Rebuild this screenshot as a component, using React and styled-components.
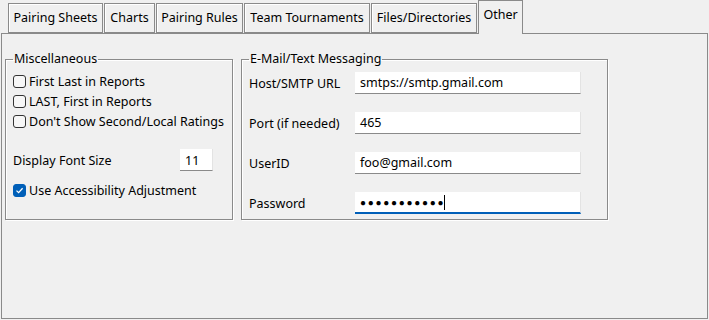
import React from 'react';
import styled, { createGlobalStyle } from 'styled-components';

const GlobalStyle = createGlobalStyle`
  html, body {
    margin: 0;
    padding: 0;
    background: #f0f0f0;
  }
  body {
    font-family: "Noto Sans", "Open Sans", sans-serif;
    font-size: 12px;
    color: #000;
  }
`;

const tabs = [
  { label: 'Pairing Sheets', width: 95 },
  { label: 'Charts', width: 51 },
  { label: 'Pairing Rules', width: 87 },
  { label: 'Team Tournaments', width: 126 },
  { label: 'Files/Directories', width: 106 },
  { label: 'Other', width: 45, active: true },
];

const miscOptions = [
  { label: 'First Last in Reports' },
  { label: 'LAST, First in Reports' },
  { label: "Don't Show Second/Local Ratings" },
];

const mailFields = [
  { label: 'Host/SMTP URL', value: 'smtps://smtp.gmail.com' },
  { label: 'Port (if needed)', value: '465' },
  { label: 'UserID', value: 'foo@gmail.com' },
];

function CheckMark() {
  return (
    <svg width="9" height="9" viewBox="0 0 9 9">
      <path d="M1.5 4.6 L3.6 6.6 L7.6 2.2" fill="none" stroke="#fff" strokeWidth="1.3" />
    </svg>
  );
}

function App() {
  return (
    <Window>
      <GlobalStyle />
      <TabBar>
        {tabs.map((t) => (
          <Tab key={t.label} $width={t.width} $active={t.active}>
            {t.label}
          </Tab>
        ))}
      </TabBar>
      <Panel>
        <Group $width={228}>
          <Legend>Miscellaneous</Legend>
          <CheckList>
            {miscOptions.map((o) => (
              <CheckRow key={o.label}>
                <Box />
                {o.label}
              </CheckRow>
            ))}
          </CheckList>
          <FontRow>
            <span>Display Font Size</span>
            <SmallInput>11</SmallInput>
          </FontRow>
          <CheckRow>
            <Box $checked>
              <CheckMark />
            </Box>
            Use Accessibility Adjustment
          </CheckRow>
        </Group>
        <Group $width={367}>
          <Legend>E-Mail/Text Messaging</Legend>
          <FieldList>
            {mailFields.map((f) => (
              <FieldRow key={f.label}>
                <FieldLabel>{f.label}</FieldLabel>
                <TextField>{f.value}</TextField>
              </FieldRow>
            ))}
            <FieldRow>
              <FieldLabel>Password</FieldLabel>
              <TextField $focused>
                <Dots>●●●●●●●●●●●</Dots>
                <Caret />
              </TextField>
            </FieldRow>
          </FieldList>
        </Group>
      </Panel>
    </Window>
  );
}

export default App;

const Window = styled.div`
  width: 709px;
  height: 320px;
  display: flex;
  flex-direction: column;
  overflow: hidden;
`;

const TabBar = styled.div`
  display: flex;
  align-items: flex-start;
  gap: 1px;
  height: 33px;
  padding-left: 8px;
  position: relative;
  z-index: 1;
`;

const Tab = styled.div`
  box-sizing: border-box;
  width: ${(p) => p.$width}px;
  height: ${(p) => (p.$active ? 34 : 30)}px;
  margin-top: ${(p) => (p.$active ? 0 : 3)}px;
  border: 1px solid #8a8a8a;
  border-bottom: ${(p) => (p.$active ? 'none' : '1px solid #8a8a8a')};
  box-shadow: ${(p) => (p.$active ? 'none' : 'inset 1px 1px 0 #fff')};
  background: #f0f0f0;
  display: flex;
  justify-content: center;
  padding-top: ${(p) => (p.$active ? 5 : 5)}px;
  font-size: 12.5px;
  white-space: nowrap;
`;

const Panel = styled.div`
  box-sizing: border-box;
  margin-left: 1px;
  width: 707px;
  height: 286px;
  border: 1px solid #8a8a8a;
  display: flex;
  align-items: flex-start;
  gap: 8px;
  padding: 18px 0 0 3px;
`;

const Group = styled.fieldset`
  box-sizing: border-box;
  margin: 0;
  width: ${(p) => p.$width}px;
  height: 168px;
  padding: 6px 0 0 7px;
  border: 1px solid #8a8a8a;
  box-shadow: 1px 1px 0 #fff, inset 1px 1px 0 #fff;
  display: flex;
  flex-direction: column;
`;

const Legend = styled.legend`
  margin-left: 0;
  padding: 0 1px;
  font-size: 12.5px;
  line-height: 14px;
`;

const CheckList = styled.div`
  display: flex;
  flex-direction: column;
  gap: 7px;
  margin-top: 3px;
`;

const CheckRow = styled.div`
  display: flex;
  align-items: center;
  gap: 3px;
  height: 13px;
  font-size: 12.5px;
  white-space: nowrap;
`;

const Box = styled.span`
  box-sizing: border-box;
  width: 13px;
  height: 13px;
  border-radius: 3px;
  border: 1px solid ${(p) => (p.$checked ? '#005fb8' : '#333')};
  background: ${(p) => (p.$checked ? '#005fb8' : '#f7f7f7')};
  display: flex;
  align-items: center;
  justify-content: center;
  flex: none;
`;

const FontRow = styled.div`
  display: flex;
  align-items: center;
  justify-content: space-between;
  width: 200px;
  margin: 21px 0 13px;
  font-size: 12.5px;
`;

const SmallInput = styled.div`
  box-sizing: border-box;
  width: 33px;
  height: 22px;
  background: #fff;
  border-bottom: 1px solid #8a8a8a;
  border-right: 1px solid #e3e3e3;
  padding: 3px 0 0 5px;
  font-size: 12.5px;
`;

const FieldList = styled.div`
  display: flex;
  flex-direction: column;
  gap: 18px;
  margin-top: 0;
`;

const FieldRow = styled.div`
  display: flex;
  align-items: center;
  height: 22px;
  font-size: 12.5px;
`;

const FieldLabel = styled.span`
  width: 106px;
  white-space: nowrap;
`;

const TextField = styled.div`
  box-sizing: border-box;
  width: 226px;
  height: 22px;
  background: #fff;
  border-bottom: ${(p) => (p.$focused ? '2px solid #005fb8' : '1px solid #8a8a8a')};
  border-right: 1px solid #e3e3e3;
  padding: 0 0 0 ${(p) => (p.$focused ? 5 : 5)}px;
  display: flex;
  align-items: center;
  font-size: 12.5px;
  white-space: nowrap;
`;

const Dots = styled.span`
  font-size: 10px;
  letter-spacing: 1.7px;
  line-height: 12px;
`;

const Caret = styled.span`
  width: 1px;
  height: 15px;
  background: #000;
  margin-left: -1px;
`;
